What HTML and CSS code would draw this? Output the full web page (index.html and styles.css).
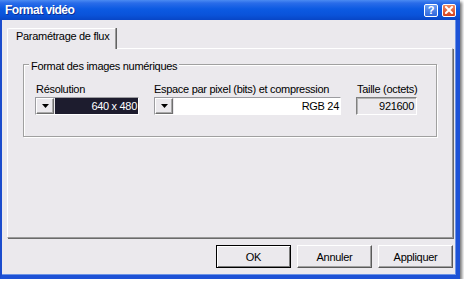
FILE: index.html
```html
<!DOCTYPE html>
<html lang="fr">
<head>
<meta charset="utf-8">
<title>Format vidéo</title>
<link rel="stylesheet" href="styles.css">
</head>
<body>
<div class="window">
  <div class="titlebar">
    <span class="title">Format vidéo</span>
    <div class="caption-btns">
      <span class="cap-btn help">?</span>
      <span class="cap-btn close"><svg width="8" height="8" viewBox="0 0 8 8"><path d="M1 1L7 7M7 1L1 7" stroke="#fff" stroke-width="2" stroke-linecap="square"/></svg></span>
    </div>
  </div>
  <div class="frame">
    <div class="tabs"><div class="tab">Paramétrage de flux</div></div>
    <div class="panel">
      <div class="group">
        <span class="group-title">Format des images numériques</span>
        <div class="fields">
          <div class="field field-res">
            <div class="label indent">Résolution</div>
            <div class="combo">
              <span class="drop"><svg width="7" height="4" viewBox="0 0 7 4"><path d="M0 0H7L3.5 4Z" fill="#000"/></svg></span>
              <span class="value selected">640 x 480</span>
            </div>
          </div>
          <div class="field field-space">
            <div class="label">Espace par pixel (bits) et compression</div>
            <div class="combo">
              <span class="drop"><svg width="7" height="4" viewBox="0 0 7 4"><path d="M0 0H7L3.5 4Z" fill="#000"/></svg></span>
              <span class="value edit">RGB 24</span>
            </div>
          </div>
          <div class="field field-size">
            <div class="label indent">Taille (octets)</div>
            <div class="readonly">921600</div>
          </div>
        </div>
      </div>
    </div>
    <div class="actions">
      <button class="btn default">OK</button>
      <button class="btn">Annuler</button>
      <button class="btn">Appliquer</button>
    </div>
  </div>
</div>
</body>
</html>
```

FILE: styles.css
```css
* { box-sizing: border-box; }

body {
  margin: 0;
  background: #ffffff;
  font-family: "Liberation Sans", Arial, sans-serif;
  font-size: 11px;
  letter-spacing: -0.3px;
  color: #000;
}

.window {
  width: 460px;
  height: 279px;
  display: flex;
  flex-direction: column;
  box-shadow: 2px 2px 3px rgba(0, 0, 0, 0.55);
}

.titlebar {
  height: 20px;
  flex: none;
  display: flex;
  align-items: center;
  padding: 0 4px 0 5px;
  background: linear-gradient(#4b8bf2 0px, #2a6ce9 3px, #0c5ae2 9px, #0a53da 15px, #0846c6 20px);
}

.title {
  flex: 1;
  color: #fff;
  font-weight: bold;
  font-size: 12px;
  letter-spacing: -0.5px;
  line-height: 20px;
  text-shadow: 1px 1px 0 #0b2f96;
}

.caption-btns {
  display: flex;
  gap: 4px;
}

.cap-btn {
  width: 14px;
  height: 13px;
  border: 1px solid #fff;
  border-radius: 2px;
  display: flex;
  align-items: center;
  justify-content: center;
  color: #fff;
  font-weight: bold;
  font-size: 11px;
  letter-spacing: 0;
  line-height: 11px;
}

.help { background: linear-gradient(#6c9ff2, #2f67dc); }
.close { background: linear-gradient(#ef8a62, #d3421f); }

.frame {
  flex: 1;
  display: flex;
  flex-direction: column;
  background: #ebe9ed;
  border-left: 2px solid #1b4ccd;
  border-right: 4px solid #1d52d6;
  border-bottom: 4px solid #1d52d6;
  box-shadow: inset -1px -1px 0 #6b93e6;
  padding: 8px 3px 0 5px;
}

.tabs {
  display: flex;
  height: 21px;
  margin-bottom: -1px;
  position: relative;
  z-index: 1;
}

.tab {
  width: 109px;
  height: 21px;
  background: #ebe9ed;
  border-top: 1px solid #fff;
  border-left: 1px solid #fff;
  border-right: 1px solid #9a9a9a;
  border-top-left-radius: 2px;
  box-shadow: 1px 0 0 #626262;
  padding: 1px 0 0 8px;
  line-height: 13px;
  white-space: nowrap;
}

.panel {
  height: 190px;
  border: 1px solid;
  border-color: #fff #9a9a9a #9a9a9a #fff;
  box-shadow: 1px 1px 0 #6a6a6a;
  padding: 15px 0 0 15px;
}

.group {
  position: relative;
  width: 414px;
  height: 73px;
  border: 1px solid #a0a0a0;
  box-shadow: 1px 1px 0 #fff, inset 1px 1px 0 #fff;
  padding: 17px 0 0 11px;
}

.group-title {
  position: absolute;
  left: 5px;
  top: -5px;
  padding: 0 2px;
  background: #ebe9ed;
  line-height: 13px;
  white-space: nowrap;
}

.fields {
  display: flex;
}

.field-res { width: 104px; margin-right: 15px; }
.field-space { width: 187px; margin-right: 15px; }
.field-size { width: 61px; }

.label {
  height: 14px;
  line-height: 14px;
  margin-bottom: 1px;
  white-space: nowrap;
}

.label.indent { padding-left: 1px; }

.combo {
  display: flex;
  height: 18px;
  border: 1px solid;
  border-color: #9c9ca0 #fff #fff #9c9ca0;
}

.drop {
  width: 18px;
  flex: none;
  display: flex;
  align-items: center;
  justify-content: center;
  background: #ebe9ed;
  border: 1px solid;
  border-color: #fff #6f6f6f #6f6f6f #fff;
  box-shadow: inset -1px -1px 0 #a8a8a8;
}

.value {
  flex: 1;
  margin-left: 1px;
  text-align: right;
  padding-right: 1px;
  line-height: 16px;
  white-space: nowrap;
}

.value.selected {
  background: #1d1c2e;
  color: #fff;
}

.value.edit {
  background: #fff;
}

.readonly {
  height: 18px;
  border: 1px solid;
  border-color: #808080 #fff #fff #808080;
  box-shadow: inset 1px 1px 0 #b4b4b4;
  text-align: right;
  padding-right: 2px;
  line-height: 16px;
}

.actions {
  display: flex;
  justify-content: flex-end;
  gap: 6px;
  margin-top: 7px;
}

.btn {
  width: 75px;
  height: 23px;
  padding: 0;
  font: inherit;
  letter-spacing: inherit;
  color: #000;
  background: #ebe9ed;
  border: 1px solid;
  border-color: #fff #5a5a5a #5a5a5a #fff;
  box-shadow: inset -1px -1px 0 #a0a0a0;
}

.btn.default {
  border: 1px solid #000;
  box-shadow: inset 1px 1px 0 #fff, inset -1px -1px 0 #7a7a7a;
}
```
